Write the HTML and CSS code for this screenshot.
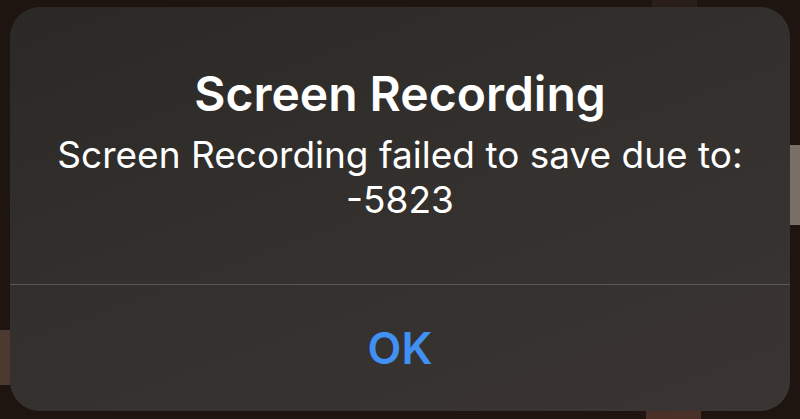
FILE: index.html
```html
<!DOCTYPE html>
<html lang="en">
<head>
    <meta charset="UTF-8">
    <meta name="viewport" content="width=device-width, initial-scale=1.0">
    <title>Screen Recording</title>
    <link rel="stylesheet" href="styles.css">
</head>
<body>

    <!-- Alert -->
    <div class="alert">
        <div class="alert-content">
            <h1 class="alert-title">Screen Recording</h1>
            <p class="alert-message">Screen Recording failed to save due to:<br>-5823</p>
        </div>
        <div class="alert-actions">
            <button class="alert-button">OK</button>
        </div>
    </div>

</body>
</html>
```

FILE: styles.css
```css
html, body {
    height: 100%;
}

body {
    margin: 0;
    padding: 7px 10px 8px 10px;
    box-sizing: border-box;
    font-family: Inter, "Noto Sans", sans-serif;
    background-color: #1e1410;
    background-image:
        linear-gradient(#7a6e69, #7a6e69),
        linear-gradient(#4c392f, #4c392f),
        linear-gradient(#4a3127, #4a3127),
        linear-gradient(#2a1e1a, #2a1e1a);
    background-repeat: no-repeat;
    background-size: 10px 80px, 10px 55px, 55px 10px, 45px 8px;
    background-position: 790px 145px, 0 330px, 646px 411px, 652px 0;
    display: flex;
}

.alert {
    flex: 1;
    display: flex;
    flex-direction: column;
    border-radius: 30px;
    background: linear-gradient(160deg, #2b2926 0%, #33302d 50%, #3a3532 100%);
    overflow: hidden;
}

.alert-content {
    padding: 58px 20px 0;
    height: 219px;
    text-align: center;
    color: #fff;
    border-bottom: 1px solid #5b5754;
}

.alert-title {
    margin: 0;
    font-size: 48px;
    line-height: 58px;
    font-weight: 600;
}

.alert-message {
    margin: 9px 0 0;
    font-size: 37px;
    line-height: 45px;
    font-weight: 400;
}

.alert-actions {
    flex: 1;
    display: flex;
    justify-content: center;
    align-items: center;
}

.alert-button {
    background: none;
    border: none;
    padding: 0;
    font-family: inherit;
    font-size: 44px;
    font-weight: 600;
    color: #4190f4;
    cursor: pointer;
}
```
